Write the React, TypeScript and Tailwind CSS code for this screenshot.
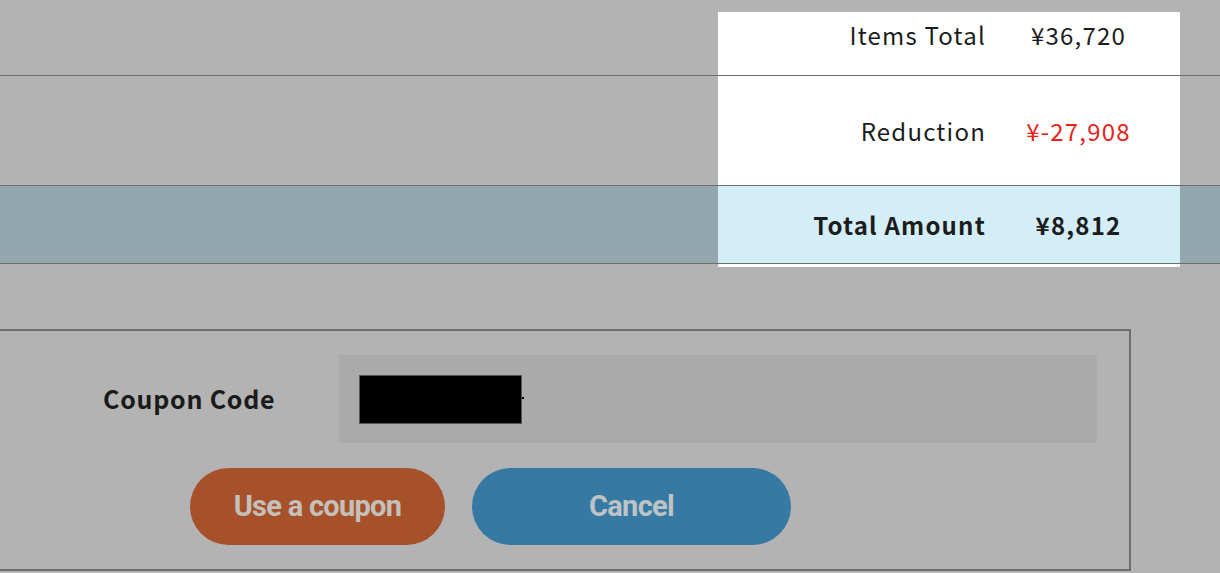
import React from "react";

const jp = { fontFamily: '"Noto Sans CJK JP", "Noto Sans", sans-serif' };

function Row({
  h,
  bandBg,
  cellBg,
  label,
  value,
  valueCls,
  bold,
  top,
}: {
  h: string;
  bandBg: string;
  cellBg: string;
  label: string;
  value: string;
  valueCls: string;
  bold?: boolean;
  top?: boolean;
}) {
  return (
    <div className={`flex ${h} ${bandBg} border-b border-[#6e6e6e]`}>
      <div className="w-[718px] shrink-0" />
      <div className={`w-[462px] shrink-0 ${top ? "pt-[12px]" : ""}`}>
        <div
          className={`h-full ${cellBg} flex ${top ? "items-start pt-[5px]" : "items-center"} ${bold ? "font-bold" : ""}`}
        >
          <div className="w-[268px] text-right text-[24px] tracking-[0.05em] text-[#1c1c1c]">{label}</div>
          <div className={`w-[185px] text-center text-[24px] tracking-[0.05em] ${valueCls}`}>{value}</div>
        </div>
      </div>
      <div className="flex-1" />
    </div>
  );
}

export default function App() {
  return (
    <div className="w-[1220px] h-[573px] bg-[#b3b3b3] overflow-hidden" style={jp}>
      <Row
        h="h-[76px]"
        bandBg="bg-[#b3b3b3]"
        cellBg="bg-white"
        label="Items Total"
        value="¥36,720"
        valueCls="text-[#1c1c1c]"
        top
      />
      <Row
        h="h-[110px]"
        bandBg="bg-[#b3b3b3]"
        cellBg="bg-white"
        label="Reduction"
        value="¥-27,908"
        valueCls="text-[#e8231b]"
      />
      <Row
        h="h-[78px]"
        bandBg="bg-[#93a8ae]"
        cellBg="bg-[#d4eef8]"
        label="Total Amount"
        value="¥8,812"
        valueCls="text-[#1c1c1c]"
        bold
      />
      <div className="flex h-[3px]">
        <div className="w-[718px] shrink-0" />
        <div className="w-[462px] shrink-0 bg-white" />
      </div>

      <div className="mt-[62px] ml-[-10px] w-[1141px] h-[242px] border-2 border-[#6e6e6e] pt-[24px] pb-[24px]">
        <div className="flex items-center">
          <div className="w-[347px] shrink-0 pl-[111px] text-[25px] font-bold tracking-[0.03em] text-[#1a1a1a]">
            Coupon Code
          </div>
          <div className="w-[758px] h-[88px] bg-[#aaaaaa] flex items-center pl-[20px]">
            <div className="w-[163px] h-[49px] bg-black border border-[#555]" />
            <div className="w-[2px] h-[2px] bg-black mb-[3px]" />
          </div>
        </div>
        <div className="flex mt-[25px] pl-[198px] gap-[27px]" style={{ fontFamily: "Roboto, sans-serif" }}>
          <button className="w-[255px] h-[77px] rounded-full bg-[#a6512a] text-[#c4c0bc] text-[29px] font-bold tracking-[-0.025em]">
            Use a coupon
          </button>
          <button className="w-[319px] h-[77px] rounded-full bg-[#367aa4] text-[#bfc3c6] text-[29px] font-bold tracking-[-0.025em]">
            Cancel
          </button>
        </div>
      </div>
    </div>
  );
}
